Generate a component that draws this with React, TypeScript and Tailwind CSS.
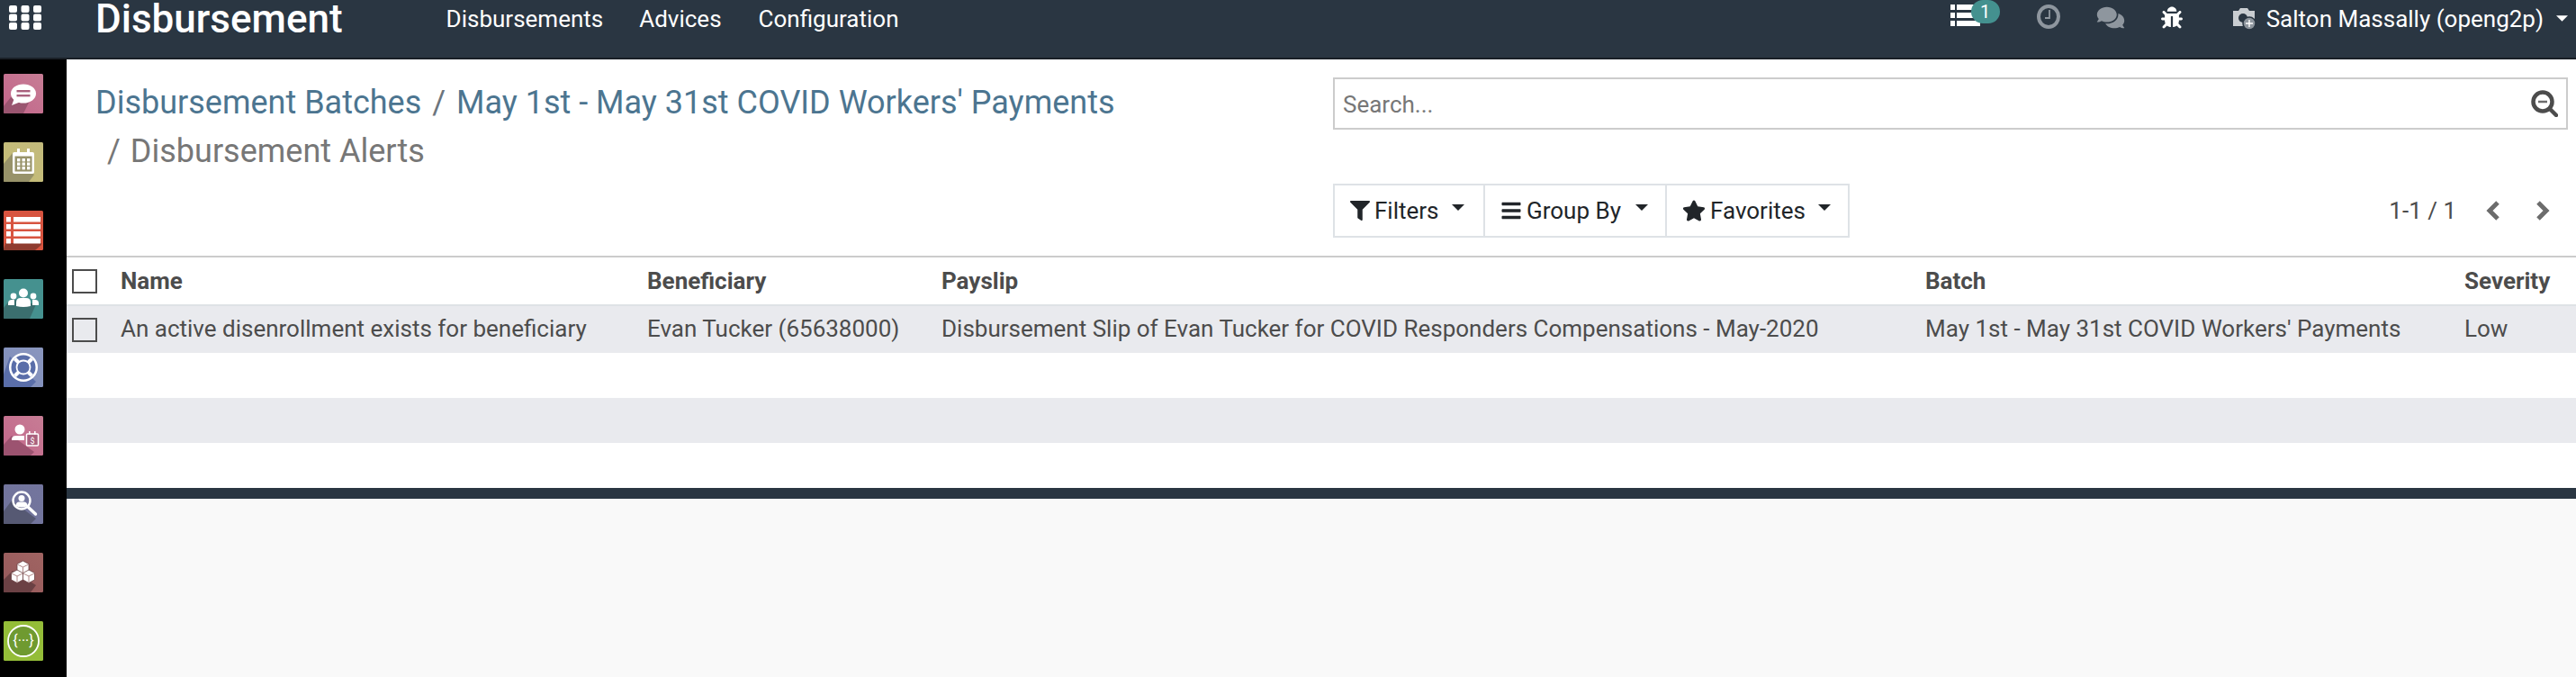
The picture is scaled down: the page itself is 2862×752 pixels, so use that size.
import type { ReactNode } from "react";
import { FaBug, FaBars, FaComments, FaFilter, FaStar } from "react-icons/fa";

// Sidebar tile: flat colour, long shadow polygon, white glyph on top
function AppIcon({ from, to, shadow, points, children }: { from: string; to: string; shadow: string; points: string; children: ReactNode }) {
  const id = `tile-${from.slice(1)}-${to.slice(1)}`;
  return (
    <svg viewBox="0 0 44 44" className="w-[44px] h-[44px] shrink-0">
      <defs>
        <linearGradient id={id} x1="0" y1="1" x2="1" y2="0">
          <stop offset="0" stopColor={from} />
          <stop offset="1" stopColor={to} />
        </linearGradient>
      </defs>
      <rect width="44" height="44" rx="1.5" fill={`url(#${id})`} />
      <polygon points={points} fill={shadow} />
      {children}
    </svg>
  );
}

const Cube = ({ x, y }: { x: number; y: number }) => (
  <g transform={`translate(${x} ${y})`}>
    <path d="M0 3.500 L6.500 0 L13 3.500 V11 L6.500 14.500 L0 11z" fill="#fff" stroke="#6b4144" strokeWidth="0.8" />
    <path d="M0.500 4 L6.500 7 L12.500 4 M6.500 7 V14" fill="none" stroke="#a77a7a" strokeWidth="0.9" />
  </g>
);

const SidebarIcons = () => (
  <>
    <AppIcon from="#c2658a" to="#c77d95" shadow="#9a5570" points="0,36 8,26 30,28 22,44 1,44 0,43">
      <ellipse cx="22" cy="22" rx="14" ry="10.5" fill="#fff" />
      <polygon points="12,27 9,35 19,31" fill="#fff" />
      <rect x="14.5" y="18" width="15" height="2.4" fill="#a9607d" />
      <rect x="14.5" y="23" width="15" height="2.4" fill="#a9607d" />
    </AppIcon>
    <AppIcon from="#c6bd76" to="#c2ba7c" shadow="#98936a" points="0,24 10,12 34,36 28,44 1,44 0,43">
      <rect x="10" y="11" width="24" height="24" rx="2" fill="#fff" />
      <rect x="15" y="7" width="3" height="6" fill="#fff" />
      <rect x="26" y="7" width="3" height="6" fill="#fff" />
      <rect x="12.5" y="15.5" width="19" height="17" fill="#98936a" />
      {[15, 20.5, 26].map((x) => [18, 22.5, 27].map((y) => <rect key={`${x}-${y}`} x={x} y={y} width="3.4" height="3.4" fill="#fff" />))}
    </AppIcon>
    <AppIcon from="#d9553f" to="#d6533f" shadow="#8f3c2f" points="2,36 42,36 42,38 35,44 1,44 0,43">
      {[7, 15, 23, 31].map((y) => (
        <g key={y} fill="#fff">
          <rect x="3" y={y} width="5" height="5.5" />
          <rect x="11" y={y} width="30" height="5.5" />
        </g>
      ))}
    </AppIcon>
    <AppIcon from="#45918f" to="#45918f" shadow="#3b6f6f" points="0,32 8,22 36,28 29,44 1,44 0,43">
      <circle cx="22" cy="15.5" r="5" fill="#fff" />
      <path d="M14 30 v-4 q0-5 5-5 h6 q5 0 5 5 v4 q-8 2-16 0z" fill="#fff" />
      <circle cx="11" cy="19" r="3.4" fill="#fff" />
      <circle cx="33" cy="19" r="3.4" fill="#fff" />
      <path d="M5 29 v-2 q0-4 4-4 h3 v6z" fill="#fff" />
      <path d="M39 29 v-2 q0-4-4-4 h-3 v6z" fill="#fff" />
    </AppIcon>
    <AppIcon from="#7e8dbb" to="#8a96be" shadow="#5a6ea9" points="0,30 7,10 36,38 30,44 1,44 0,43">
      <circle cx="22" cy="22" r="16" fill="#fff" />
      <circle cx="22" cy="22" r="13.5" fill="#5a6ea9" />
      <path d="M12.500 12.500 L31.500 31.500 M31.500 12.500 L12.500 31.500" stroke="#fff" strokeWidth="4" />
      <circle cx="22" cy="22" r="7.500" fill="#5a6ea9" stroke="#fff" strokeWidth="1.800" />
    </AppIcon>
    <AppIcon from="#c2668a" to="#c77d95" shadow="#9c5370" points="0,32 9,22 34,40 30,44 1,44 0,43">
      <circle cx="18" cy="15" r="5.5" fill="#fff" />
      <path d="M9 27 v-1 q0-4 5-4 h9 v5z" fill="#fff" />
      <rect x="25.5" y="20" width="13" height="13" rx="1" fill="#a9607d" stroke="#fff" strokeWidth="1.5" />
      <rect x="28" y="17" width="1.6" height="3.5" fill="#fff" />
      <rect x="34" y="17" width="1.6" height="3.5" fill="#fff" />
      <text x="32" y="30.5" textAnchor="middle" fontSize="9" fontFamily="Roboto, sans-serif" fill="#fff">$</text>
    </AppIcon>
    <AppIcon from="#71749c" to="#73759d" shadow="#565973" points="0,30 9,18 36,38 30,44 1,44 0,43">
      <circle cx="20" cy="18" r="9.5" fill="none" stroke="#fff" strokeWidth="2.4" />
      <circle cx="20" cy="15.5" r="3.5" fill="#fff" />
      <path d="M13.5 24 q0-4.5 4-4.5 h5 q4 0 4 4.5 q-6.500 3-13 0z" fill="#fff" />
      <path d="M27.5 25.500 L35.500 33" stroke="#fff" strokeWidth="3.4" strokeLinecap="round" />
    </AppIcon>
    <AppIcon from="#96595b" to="#a06462" shadow="#6b4144" points="0,30 10,20 36,36 30,44 1,44 0,43">
      <Cube x={15} y={9} />
      <Cube x={8.500} y={19} />
      <Cube x={21.500} y={19} />
    </AppIcon>
    <AppIcon from="#94bd38" to="#94bd38" shadow="#94bd38" points="0,0">
      <circle cx="22" cy="22" r="17" fill="#6f9a30" stroke="#fff" strokeWidth="1.800" />
      <text x="22" y="27" textAnchor="middle" fontSize="16" fontFamily="Roboto, sans-serif" fill="#fff">{"{···}"}</text>
    </AppIcon>
  </>
);

const columns = "grid grid-cols-[60px_585px_327px_1093px_599px_1fr]";

const Checkbox = () => <span className="block w-[28px] h-[27px] border-[2px] border-[#4c4c4c] ml-[6px]" />;

const Caret = ({ className }: { className: string }) => (
  <svg viewBox="0 0 14 7" className={className} fill="currentColor">
    <polygon points="0,0 14,0 7,7" />
  </svg>
);

const Chevron = ({ points }: { points: string }) => (
  <svg viewBox="0 0 18 22" className="w-[18px] h-[22px]" fill="none" stroke="#6c6c6c" strokeWidth="5">
    <polyline points={points} />
  </svg>
);

const FilterButton = ({ icon, label, width, caret }: { icon: ReactNode; label: string; width: string; caret: string }) => (
  <div className={`${width} flex items-center pl-[17px] gap-[5px] text-[26px] text-[#212529] border-r-[2px] border-[#dee2e6] last:border-r-0`}>
    {icon}
    <span>{label}</span>
    <Caret className={caret} />
  </div>
);

export default function App() {
  return (
    <div className="w-[2862px] h-[752px] overflow-hidden flex flex-col bg-[#f9f9f9] font-['Roboto',sans-serif] text-[#4c4c4c]">
      <header className="h-[66px] shrink-0 bg-[#2a3642] border-b-[2px] border-[#191f26] text-white flex items-start">
        <svg viewBox="0 0 36 27" className="w-[36px] h-[27px] ml-[10px] mt-[6px]" fill="#fff">
          {[0, 13.500, 27].map((x) => [0, 9.500, 19].map((y) => <rect key={`${x}-${y}`} x={x} y={y} width="9" height="8" rx="2" />))}
        </svg>
        <div className="ml-[60px] text-[44px] font-medium leading-[52px] -mt-[5px]">Disbursement</div>
        <nav className="flex ml-[115px] mt-[5px] text-[26px] leading-[32px]">
          <span>Disbursements</span>
          <span className="ml-[40px]">Advices</span>
          <span className="ml-[41px]">Configuration</span>
        </nav>
        <div className="ml-auto flex items-start h-full">
          <div className="relative w-[33px] h-[27px] mt-[5px]">
            <svg viewBox="0 0 33 25" className="w-[33px] h-[25px]" fill="#fff">
              {[0, 9, 18].map((y) => (
                <g key={y}>
                  <rect x="0" y={y} width="5" height="6" />
                  <rect x="7" y={y} width="26" height="6" />
                </g>
              ))}
            </svg>
            <span className="absolute left-[23px] -top-[5px] w-[32px] h-[26px] rounded-full bg-[#44918f] text-white text-[20px] leading-[26px] text-center">1</span>
          </div>
          <svg viewBox="0 0 26 27" className="w-[26px] h-[27px] ml-[63px] mt-[5px]" fill="none" stroke="#8e969e">
            <ellipse cx="13" cy="13.500" rx="11" ry="11.500" strokeWidth="4" />
            <path d="M14 6 V15 H9" strokeWidth="1.800" />
          </svg>
          <FaComments className="w-[32px] h-[27px] ml-[40px] mt-[6px] text-[#8e969e]" />
          <FaBug className="w-[24px] h-[27px] ml-[40px] mt-[6px] text-white" />
          <svg viewBox="0 0 28 28" className="w-[28px] h-[28px] ml-[54px] mt-[6px]">
            <path d="M2 6 h6 l2-3 h8 l2 3 h6 v17 h-24z" fill="#c9cdd1" />
            <circle cx="13" cy="14" r="5" fill="#2a3642" />
            <circle cx="20" cy="20" r="7" fill="#8e969e" stroke="#2a3642" strokeWidth="1.500" />
            <path d="M20 16 v8 M16 20 h8" stroke="#fff" strokeWidth="1.400" />
          </svg>
          <span className="ml-[11px] mt-[5px] text-[26px] leading-[32px]">Salton Massally (openg2p)</span>
          <Caret className="w-[13px] h-[7px] ml-[14px] mr-[9px] mt-[17px]" />
        </div>
      </header>

      <div className="flex-1 flex min-h-0">
        <aside className="w-[74px] shrink-0 bg-black flex flex-col gap-[32px] pt-[16px] pl-[4px]">
          <SidebarIcons />
        </aside>

        <main className="flex-1 min-w-0 flex flex-col">
          <div className="h-[220px] bg-white flex border-b-[2px] border-[#cccccc]">
            <div className="w-[1407px] pl-[32px] pt-[21px] text-[36px] leading-[54px]">
              <div className="text-[#4c7590]">
                Disbursement Batches <span className="text-[#6c757d] mx-[3px]">/</span> May 1st - May 31st COVID Workers' Payments
              </div>
              <div className="text-[#777777] pl-[13px]">
                <span className="mr-[11px]">/</span>Disbursement Alerts
              </div>
            </div>
            <div className="flex-1 pt-[20px] pr-[9px]">
              <div className="h-[58px] border-[2px] border-[#cccccc] flex items-center justify-between pl-[9px] pr-[9px] text-[26px] text-[#777777]">
                <span className="mt-[2px]">Search...</span>
                <svg viewBox="0 0 30 30" className="w-[30px] h-[30px]" fill="none" stroke="#4c4c4c">
                  <circle cx="13" cy="13" r="10.500" strokeWidth="4.500" />
                  <path d="M21 21 L28 28" strokeWidth="4.500" strokeLinecap="round" />
                  <path d="M8 13 H18" stroke="#6c6c6c" strokeWidth="2.500" />
                </svg>
              </div>
              <div className="mt-[60px] flex items-center justify-between">
                <div className="flex h-[60px] border-[2px] border-[#dee2e6]">
                  <FilterButton icon={<FaFilter className="w-[22px] h-[22px]" />} label="Filters" width="w-[167px]" caret="w-[14px] h-[7px] ml-[9px] -mt-[8px]" />
                  <FilterButton icon={<FaBars className="w-[24px] h-[24px]" />} label="Group By" width="w-[202px]" caret="w-[14px] h-[7px] ml-[11px] -mt-[8px]" />
                  <FilterButton icon={<FaStar className="w-[26px] h-[24px]" />} label="Favorites" width="w-[201px]" caret="w-[14px] h-[7px] ml-[9px] -mt-[8px]" />
                </div>
                <div className="flex items-center text-[26px] text-[#4c4c4c] pr-[19px]">
                  <span>1-1 / 1</span>
                  <span className="ml-[32px]"><Chevron points="14,2 5,11 14,20" /></span>
                  <span className="ml-[37px]"><Chevron points="4,2 13,11 4,20" /></span>
                </div>
              </div>
            </div>
          </div>

          <div className={`${columns} h-[54px] bg-white border-b-[2px] border-[#dee2e6] items-center text-[26px] font-bold`}>
            <Checkbox />
            <span>Name</span>
            <span>Beneficiary</span>
            <span>Payslip</span>
            <span>Batch</span>
            <span>Severity</span>
          </div>
          <div className={`${columns} h-[52px] bg-[#e9eaee] items-center text-[26px]`}>
            <Checkbox />
            <span className="whitespace-nowrap -mt-[1px]">An active disenrollment exists for beneficiary</span>
            <span className="whitespace-nowrap -mt-[1px]">Evan Tucker (65638000)</span>
            <span className="whitespace-nowrap -mt-[1px]">Disbursement Slip of Evan Tucker for COVID Responders Compensations - May-2020</span>
            <span className="whitespace-nowrap -mt-[1px]">May 1st - May 31st COVID Workers' Payments</span>
            <span className="-mt-[1px]">Low</span>
          </div>
          <div className="h-[50px] bg-white" />
          <div className="h-[50px] bg-[#e9eaee]" />
          <div className="h-[50px] bg-white" />
          <div className="h-[12px] bg-[#2a3642]" />
        </main>
      </div>
    </div>
  );
}
